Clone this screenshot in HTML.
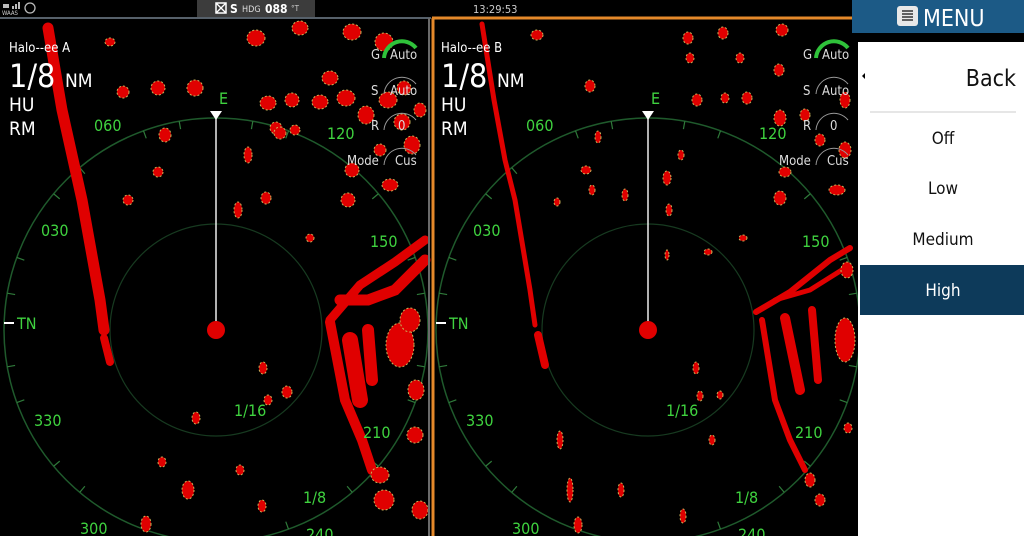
<!DOCTYPE html>
<html><head><meta charset="utf-8"><style>
html,body{margin:0;padding:0;background:#000;width:1024px;height:536px;overflow:hidden}
svg{display:block}
text{font-family:"DejaVu Sans Condensed","Liberation Sans Narrow","Liberation Sans",sans-serif}
</style></head><body>
<svg width="1024" height="536" viewBox="0 0 1024 536" xmlns="http://www.w3.org/2000/svg">
<defs>
<g id="blobsL" fill="#e00000" stroke="#c9b45a" stroke-width="1" stroke-dasharray="2 2">
<ellipse cx="256" cy="38" rx="9" ry="8"/><ellipse cx="300" cy="28" rx="8" ry="7"/><ellipse cx="352" cy="32" rx="9" ry="8"/>
<ellipse cx="384" cy="42" rx="9" ry="9"/><ellipse cx="330" cy="78" rx="8" ry="7"/><ellipse cx="292" cy="100" rx="7" ry="7"/>
<ellipse cx="268" cy="103" rx="8" ry="7"/><ellipse cx="320" cy="102" rx="8" ry="7"/><ellipse cx="346" cy="98" rx="9" ry="8"/>
<ellipse cx="366" cy="115" rx="8" ry="9"/><ellipse cx="388" cy="100" rx="9" ry="8"/><ellipse cx="404" cy="88" rx="7" ry="7"/>
<ellipse cx="402" cy="122" rx="8" ry="8"/><ellipse cx="412" cy="145" rx="8" ry="9"/><ellipse cx="380" cy="150" rx="6" ry="6"/>
<ellipse cx="390" cy="185" rx="8" ry="6"/><ellipse cx="420" cy="110" rx="6" ry="7"/><ellipse cx="158" cy="88" rx="7" ry="7"/>
<ellipse cx="123" cy="92" rx="6" ry="6"/><ellipse cx="110" cy="42" rx="5" ry="4"/><ellipse cx="195" cy="88" rx="8" ry="8"/>
<ellipse cx="165" cy="135" rx="6" ry="7"/><ellipse cx="248" cy="155" rx="4" ry="8"/><ellipse cx="276" cy="128" rx="6" ry="6"/>
<ellipse cx="280" cy="133" rx="6" ry="6"/><ellipse cx="295" cy="130" rx="5" ry="5"/><ellipse cx="348" cy="200" rx="7" ry="7"/>
<ellipse cx="352" cy="170" rx="7" ry="7"/><ellipse cx="158" cy="172" rx="5" ry="5"/><ellipse cx="128" cy="200" rx="5" ry="5"/>
<ellipse cx="238" cy="210" rx="4" ry="8"/><ellipse cx="266" cy="198" rx="5" ry="6"/><ellipse cx="310" cy="238" rx="4" ry="4"/>
<ellipse cx="263" cy="368" rx="4" ry="6"/><ellipse cx="287" cy="392" rx="5" ry="6"/>
<ellipse cx="268" cy="400" rx="4" ry="5"/><ellipse cx="196" cy="418" rx="4" ry="6"/><ellipse cx="188" cy="490" rx="6" ry="9"/>
<ellipse cx="162" cy="462" rx="4" ry="5"/><ellipse cx="240" cy="470" rx="4" ry="5"/><ellipse cx="262" cy="506" rx="4" ry="6"/>
<ellipse cx="146" cy="524" rx="5" ry="8"/><ellipse cx="380" cy="475" rx="9" ry="8"/><ellipse cx="384" cy="500" rx="10" ry="10"/>
<ellipse cx="420" cy="510" rx="8" ry="9"/><ellipse cx="415" cy="435" rx="8" ry="8"/><ellipse cx="416" cy="390" rx="8" ry="10"/>
<ellipse cx="400" cy="345" rx="14" ry="22"/><ellipse cx="410" cy="320" rx="10" ry="12"/>
</g>
</defs>
<rect width="1024" height="536" fill="#000"/>
<!-- LEFT PANEL -->
<g>
<circle cx="216" cy="330" r="212" fill="none" stroke="#1f5a2c" stroke-width="1.5"/>
<circle cx="216" cy="330" r="106" fill="none" stroke="#173a20" stroke-width="1.2"/>
<g stroke="#2f7a3a" stroke-width="1.2" id="ticksL">
<line x1="216" y1="118" x2="216" y2="126" transform="rotate(10 216 330)"/>
<line x1="216" y1="118" x2="216" y2="126" transform="rotate(20 216 330)"/>
<line x1="216" y1="118" x2="216" y2="126" transform="rotate(40 216 330)"/>
<line x1="216" y1="118" x2="216" y2="126" transform="rotate(50 216 330)"/>
<line x1="216" y1="118" x2="216" y2="126" transform="rotate(70 216 330)"/>
<line x1="216" y1="118" x2="216" y2="126" transform="rotate(80 216 330)"/>
<line x1="216" y1="118" x2="216" y2="126" transform="rotate(100 216 330)"/>
<line x1="216" y1="118" x2="216" y2="126" transform="rotate(110 216 330)"/>
<line x1="216" y1="118" x2="216" y2="126" transform="rotate(130 216 330)"/>
<line x1="216" y1="118" x2="216" y2="126" transform="rotate(140 216 330)"/>
<line x1="216" y1="118" x2="216" y2="126" transform="rotate(160 216 330)"/>
<line x1="216" y1="118" x2="216" y2="126" transform="rotate(-10 216 330)"/>
<line x1="216" y1="118" x2="216" y2="126" transform="rotate(-20 216 330)"/>
<line x1="216" y1="118" x2="216" y2="126" transform="rotate(-40 216 330)"/>
<line x1="216" y1="118" x2="216" y2="126" transform="rotate(-50 216 330)"/>
<line x1="216" y1="118" x2="216" y2="126" transform="rotate(-70 216 330)"/>
<line x1="216" y1="118" x2="216" y2="126" transform="rotate(-80 216 330)"/>
<line x1="216" y1="118" x2="216" y2="126" transform="rotate(-100 216 330)"/>
<line x1="216" y1="118" x2="216" y2="126" transform="rotate(-110 216 330)"/>
<line x1="216" y1="118" x2="216" y2="126" transform="rotate(-130 216 330)"/>
<line x1="216" y1="118" x2="216" y2="126" transform="rotate(-140 216 330)"/>
<line x1="216" y1="118" x2="216" y2="126" transform="rotate(-160 216 330)"/>
</g>
<g fill="none" stroke="#e00000" stroke-linecap="round">
<polyline points="48,28 62,110 82,200 100,300 104,330" stroke-width="11"/>
<polyline points="104,338 110,362" stroke-width="8"/>
<polyline points="330,320 360,285 395,262 425,240" stroke-width="9"/>
<polyline points="340,300 368,300 395,290 425,260" stroke-width="11"/>
<polyline points="330,322 345,400 362,440 372,470" stroke-width="10"/>
<polyline points="350,340 360,400" stroke-width="16"/>
<polyline points="368,330 372,380" stroke-width="12"/>
</g>
<use href="#blobsL"/>
<line x1="216" y1="116" x2="216" y2="330" stroke="#eee" stroke-width="1.5"/>
<polygon points="210,111 222,111 216,120" fill="#fff"/>
<circle cx="216" cy="330" r="9" fill="#e00000"/>
<g fill="#3fd23f" font-size="16">
<text x="219" y="104">E</text><text x="94" y="131">060</text><text x="327" y="139">120</text>
<text x="41" y="236">030</text><text x="370" y="247">150</text><text x="17" y="329">TN</text>
<text x="34" y="426">330</text><text x="363" y="438">210</text><text x="234" y="416">1/16</text>
<text x="303" y="503">1/8</text><text x="80" y="534">300</text><text x="306" y="540">240</text>
</g>
<line x1="4" y1="323" x2="14" y2="323" stroke="#fff" stroke-width="2"/>
<g fill="#fff">
<text x="9" y="52" font-size="13">Halo--ee A</text>
<text x="9" y="87" font-size="32">1/8</text><text x="65" y="87" font-size="19">NM</text>
<text x="9" y="111" font-size="19">HU</text><text x="9" y="135" font-size="19">RM</text>
</g>
<g fill="#ddd" font-size="13">
<text x="371" y="59">G</text><text x="390" y="59">Auto</text>
<text x="371" y="95">S</text><text x="390" y="95">Auto</text>
<text x="371" y="130">R</text><text x="398" y="130">0</text>
<text x="347" y="165">Mode</text><text x="395" y="165">Cus</text>
</g>
<path d="M384 58 A18 18 0 0 1 416 48" fill="none" stroke="#2fc23a" stroke-width="4"/>
<path d="M384 94 A18 18 0 0 1 416 84 M384 130 A18 18 0 0 1 416 120 M384 165 A18 18 0 0 1 416 155" fill="none" stroke="#999" stroke-width="1"/>
</g>
<!-- RIGHT PANEL -->
<g>
<circle cx="648" cy="330" r="212" fill="none" stroke="#1f5a2c" stroke-width="1.5"/>
<circle cx="648" cy="330" r="106" fill="none" stroke="#173a20" stroke-width="1.2"/>
<use href="#ticksL" transform="translate(432 0)"/>
<g fill="none" stroke="#e00000" stroke-linecap="round">
<polyline points="482,24 494,100 505,160 515,200 530,290 535,325" stroke-width="5"/>
<polyline points="538,335 545,365" stroke-width="8"/>
<polyline points="756,312 790,292 830,260 850,248" stroke-width="6"/>
<polyline points="775,300 810,290 845,268" stroke-width="5"/>
<polyline points="762,320 775,400 790,440 805,470" stroke-width="6"/>
<polyline points="785,318 800,390" stroke-width="10"/>
<polyline points="812,310 818,380" stroke-width="8"/>
</g>
<g fill="#e00000" stroke="#c9b45a" stroke-width="1" stroke-dasharray="2 2">
<ellipse cx="537" cy="35" rx="6" ry="5"/><ellipse cx="688" cy="38" rx="5" ry="6"/><ellipse cx="723" cy="33" rx="5" ry="6"/><ellipse cx="782" cy="30" rx="6" ry="6"/>
<ellipse cx="779" cy="70" rx="5" ry="6"/><ellipse cx="690" cy="58" rx="4" ry="5"/><ellipse cx="740" cy="58" rx="4" ry="5"/><ellipse cx="590" cy="86" rx="5" ry="6"/>
<ellipse cx="697" cy="100" rx="5" ry="6"/><ellipse cx="725" cy="98" rx="4" ry="5"/><ellipse cx="747" cy="98" rx="5" ry="6"/>
<ellipse cx="780" cy="118" rx="6" ry="8"/><ellipse cx="805" cy="115" rx="5" ry="6"/><ellipse cx="820" cy="140" rx="5" ry="6"/>
<ellipse cx="845" cy="100" rx="5" ry="8"/><ellipse cx="845" cy="150" rx="6" ry="8"/><ellipse cx="785" cy="172" rx="6" ry="5"/>
<ellipse cx="780" cy="198" rx="6" ry="7"/><ellipse cx="837" cy="190" rx="8" ry="5"/><ellipse cx="743" cy="238" rx="4" ry="3"/>
<ellipse cx="592" cy="190" rx="3" ry="5"/><ellipse cx="625" cy="195" rx="3" ry="6"/><ellipse cx="667" cy="178" rx="4" ry="7"/><ellipse cx="669" cy="210" rx="3" ry="6"/>
<ellipse cx="557" cy="202" rx="3" ry="4"/><ellipse cx="586" cy="170" rx="5" ry="4"/><ellipse cx="598" cy="137" rx="3" ry="6"/><ellipse cx="681" cy="155" rx="3" ry="5"/>
<ellipse cx="708" cy="252" rx="4" ry="3"/><ellipse cx="667" cy="255" rx="2" ry="5"/>
<ellipse cx="696" cy="368" rx="3" ry="6"/><ellipse cx="700" cy="396" rx="3" ry="5"/><ellipse cx="720" cy="395" rx="3" ry="4"/><ellipse cx="712" cy="440" rx="3" ry="5"/>
<ellipse cx="560" cy="440" rx="3" ry="9"/><ellipse cx="570" cy="490" rx="3" ry="12"/><ellipse cx="621" cy="490" rx="3" ry="7"/>
<ellipse cx="578" cy="525" rx="4" ry="8"/><ellipse cx="683" cy="516" rx="3" ry="7"/>
<ellipse cx="810" cy="480" rx="5" ry="7"/><ellipse cx="820" cy="500" rx="5" ry="6"/><ellipse cx="848" cy="428" rx="4" ry="5"/><ellipse cx="845" cy="340" rx="10" ry="22"/><ellipse cx="847" cy="270" rx="6" ry="8"/>
</g>
<line x1="648" y1="116" x2="648" y2="330" stroke="#eee" stroke-width="1.5"/>
<polygon points="642,111 654,111 648,120" fill="#fff"/>
<circle cx="648" cy="330" r="9" fill="#e00000"/>
<g fill="#3fd23f" font-size="16">
<text x="651" y="104">E</text><text x="526" y="131">060</text><text x="759" y="139">120</text>
<text x="473" y="236">030</text><text x="802" y="247">150</text><text x="449" y="329">TN</text>
<text x="466" y="426">330</text><text x="795" y="438">210</text><text x="666" y="416">1/16</text>
<text x="735" y="503">1/8</text><text x="512" y="534">300</text><text x="738" y="540">240</text>
</g>
<line x1="436" y1="323" x2="446" y2="323" stroke="#fff" stroke-width="2"/>
<g fill="#fff">
<text x="441" y="52" font-size="13">Halo--ee B</text>
<text x="441" y="87" font-size="32">1/8</text><text x="497" y="87" font-size="19">NM</text>
<text x="441" y="111" font-size="19">HU</text><text x="441" y="135" font-size="19">RM</text>
</g>
<g fill="#ddd" font-size="13">
<text x="803" y="59">G</text><text x="822" y="59">Auto</text>
<text x="803" y="95">S</text><text x="822" y="95">Auto</text>
<text x="803" y="130">R</text><text x="830" y="130">0</text>
<text x="779" y="165">Mode</text><text x="827" y="165">Cus</text>
</g>
<path d="M816 58 A18 18 0 0 1 848 48" fill="none" stroke="#2fc23a" stroke-width="4"/>
<path d="M816 94 A18 18 0 0 1 848 84 M816 130 A18 18 0 0 1 848 120 M816 165 A18 18 0 0 1 848 155" fill="none" stroke="#999" stroke-width="1"/>
</g>
<!-- borders -->
<line x1="0" y1="18" x2="431" y2="18" stroke="#56606a" stroke-width="2"/>
<line x1="429" y1="18" x2="429" y2="536" stroke="#6a6a6a" stroke-width="2"/>
<line x1="432" y1="18" x2="858" y2="18" stroke="#e4892a" stroke-width="3"/>
<line x1="433" y1="18" x2="433" y2="536" stroke="#e4892a" stroke-width="3"/>
<!-- top bar -->
<rect x="0" y="0" width="858" height="16" fill="#000"/>
<rect x="197" y="0" width="118" height="17" fill="#3c3c3c"/>
<rect x="216" y="3" width="10" height="10" fill="none" stroke="#fff" stroke-width="1.5"/>
<path d="M216 3 L226 13 M226 3 L216 13" stroke="#fff" stroke-width="1.3"/>
<text x="230" y="13" fill="#fff" font-size="12" font-weight="bold">S</text>
<text x="242" y="12" fill="#ddd" font-size="9">HDG</text>
<text x="265" y="13" fill="#fff" font-size="12" font-weight="bold">088</text>
<text x="291" y="11" fill="#ccc" font-size="8">°T</text>
<text x="473" y="13" fill="#ccc" font-size="11">13:29:53</text>
<text x="2" y="15" fill="#ccc" font-size="6">WAAS</text>
<rect x="3" y="4" width="6" height="4" fill="#bbb"/><rect x="12" y="6" width="2" height="3" fill="#bbb"/><rect x="15" y="4" width="2" height="5" fill="#bbb"/><rect x="18" y="2" width="2" height="7" fill="#bbb"/>
<circle cx="30" cy="8" r="5" fill="none" stroke="#bbb" stroke-width="1.3"/>
<!-- MENU -->
<rect x="858" y="0" width="166" height="536" fill="#fff"/>
<rect x="858" y="0" width="166" height="42" fill="#000"/>
<rect x="852" y="0" width="172" height="33" fill="#1c5a86"/>
<rect x="897" y="6" width="21" height="20" rx="3" fill="#e8e8e8"/>
<path d="M902 11h11M902 14h11M902 17h11M902 20h11" stroke="#333" stroke-width="1.5"/>
<text x="923" y="26" fill="#fff" font-size="23">MENU</text>
<polygon points="862,76 865,73 865,79" fill="#000"/>
<text x="1016" y="86" fill="#111" font-size="23" text-anchor="end">Back</text>
<line x1="870" y1="112" x2="1016" y2="112" stroke="#ddd" stroke-width="1.5"/>
<g fill="#111" font-size="17" text-anchor="middle">
<text x="943" y="144">Off</text><text x="943" y="194">Low</text><text x="943" y="245">Medium</text>
</g>
<rect x="860" y="265" width="164" height="50" fill="#0d3a5a"/>
<text x="943" y="296" fill="#fff" font-size="17" text-anchor="middle">High</text>
</svg>
</body></html>
